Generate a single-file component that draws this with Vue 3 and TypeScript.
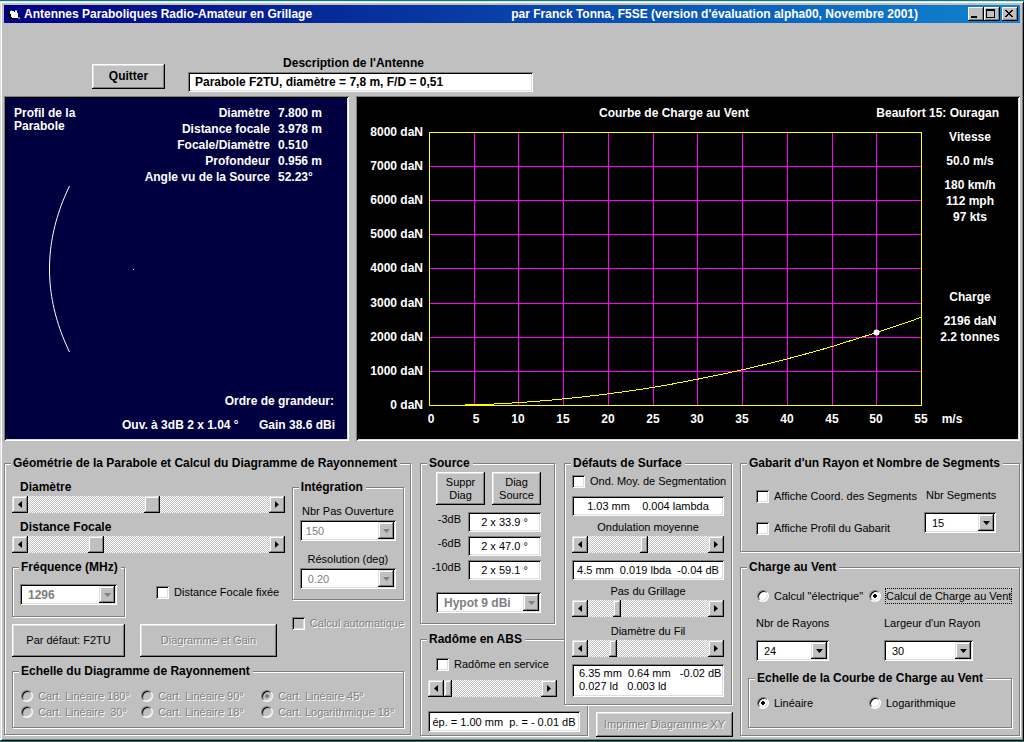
<script setup lang="ts">
import { computed, ref } from 'vue'

interface Slider { id: string; label: string; value: number }

const description = ref('Parabole F2TU, diamètre = 7,8 m, F/D = 0,51')

const profile = [
  { name: 'Diamètre', value: '7.800 m' },
  { name: 'Distance focale', value: '3.978 m' },
  { name: 'Focale/Diamètre', value: '0.510' },
  { name: 'Profondeur', value: '0.956 m' },
  { name: 'Angle vu de la Source', value: '52.23°' },
]

const geometry = ref<Slider[]>([
  { id: 'diametre', label: 'Diamètre', value: 516 },
  { id: 'focale', label: 'Distance Focale', value: 267 },
])
const ripple = ref(460)
const pitch = ref(221)
const wire = ref(186)
const radome = ref(0)

const beams = [
  { level: '-3dB', value: '2 x 33.9 °' },
  { level: '-6dB', value: '2 x 47.0 °' },
  { level: '-10dB', value: '2 x 59.1 °' },
]

const diagramScales = [
  'Cart. Linéaire 180°', 'Cart. Linéaire 90°', 'Cart. Linéaire 45°',
  'Cart. Linéaire  30°', 'Cart. Linéaire 18°', 'Cart. Logarithmique 18°',
]
const diagramScale = ref('Cart. Linéaire 45°')
const mode = ref('vent')
const loadScale = ref('lin')

// Plot area of the wind load chart
const plot = { x: 71, y: 34, w: 492, h: 273 }
const speeds = Array.from({ length: 12 }, (_, i) => i * 5)
const loads = Array.from({ length: 9 }, (_, i) => i * 1000)
const px = (v: number) => plot.x + Math.round((v / 55) * plot.w)
const py = (n: number) => plot.y + plot.h - Math.round((n / 8000) * plot.h)
const curveY = (v: number) => plot.y + plot.h - 73 * (v / 50) ** 2
const gridPath = [
  ...speeds.slice(1, -1).map((s) => `M${px(s) + 0.5} ${plot.y}v${plot.h}`),
  ...loads.slice(1, -1).map((n) => `M${plot.x} ${py(n) + 0.5}h${plot.w}`),
].join('')
const curve = computed(() =>
  Array.from({ length: 56 }, (_, v) => `${px(v) + 0.5},${(curveY(v) + 0.5).toFixed(1)}`).join(' '),
)
const dish = Array.from({ length: 43 }, (_, i) => {
  const dy = -83 + (i * 166) / 42
  return `${(43.5 + 20 * (dy / 83) ** 2).toFixed(1)},${(171 + dy).toFixed(1)}`
}).join(' ')
</script>

<template>
  <main class="window">
    <header class="titlebar">
      <svg class="logo" width="16" height="16" viewBox="0 0 16 16" shape-rendering="crispEdges" aria-hidden="true">
        <path d="M2 5h2v3h1v3h1v1h7v1H4v-1H3V9H2z" fill="#000" />
        <path d="M4 5h7v2h1v5H6v-1H5V8H4z" fill="#fff" />
        <path d="M5 4h1v1H5zM9 4h2v1H9z" fill="#40b0d0" />
        <path d="M6 4h1v1H6zM8 5h1v1H8z" fill="#000" />
        <path d="M12 11h2v2h-2z" fill="#808080" />
      </svg>
      <h1>Antennes Paraboliques Radio-Amateur en Grillage</h1>
      <span class="author">par Franck Tonna, F5SE (version d'évaluation alpha00, Novembre 2001)</span>
      <button type="button" class="sys" aria-label="Réduire">
        <svg width="12" height="10" viewBox="0 0 12 10" shape-rendering="crispEdges"><path d="M2 7h6v2H2z" /></svg>
      </button>
      <button type="button" class="sys" aria-label="Agrandir">
        <svg width="12" height="10" viewBox="0 0 12 10" shape-rendering="crispEdges"><path d="M1 0h9v9H1zM2 2v6h7V2z" fill-rule="evenodd" /></svg>
      </button>
      <button type="button" class="sys close" aria-label="Fermer">
        <svg width="12" height="10" viewBox="0 0 12 10" shape-rendering="crispEdges">
          <path d="M2 1h2v1H2zM8 1h2v1H8zM3 2h2v1H3zM7 2h2v1H7zM4 3h4v1H4zM5 4h2v1H5zM4 5h4v1H4zM3 6h2v1H3zM7 6h2v1H7zM2 7h2v1H2zM8 7h2v1H8z" />
        </svg>
      </button>
    </header>

    <section class="top">
      <button type="button" class="btn strong quit">Quitter</button>
      <div class="describe">
        <label for="description">Description de l'Antenne</label>
        <input id="description" v-model="description" class="box strong" type="text" />
      </div>
    </section>

    <section class="screens">
      <div class="screen navy">
        <svg viewBox="0 0 341 341" role="img" aria-label="Profil de la Parabole">
          <text x="8" y="19">Profil de la</text>
          <text x="8" y="32">Parabole</text>
          <g v-for="(p, i) in profile" :key="p.name">
            <text x="264" :y="19 + i * 16" text-anchor="end">{{ p.name }}</text>
            <text x="272" :y="19 + i * 16">{{ p.value }}</text>
          </g>
          <polyline :points="dish" class="dish" />
          <rect x="127" y="171" width="1" height="1" />
          <text x="328" y="307" text-anchor="end">Ordre de grandeur:</text>
          <text x="116" y="331">Ouv. à 3dB 2 x 1.04 °</text>
          <text x="329" y="331" text-anchor="end">Gain 38.6 dBi</text>
        </svg>
      </div>
      <div class="screen black">
        <svg viewBox="0 0 660 341" role="img" aria-label="Courbe de Charge au Vent">
          <text x="316" y="19" text-anchor="middle">Courbe de Charge au Vent</text>
          <text x="641" y="19" text-anchor="end">Beaufort 15: Ouragan</text>
          <path :d="gridPath" class="grid" />
          <rect :x="plot.x + 0.5" :y="plot.y + 0.5" :width="plot.w" :height="plot.h" class="frame" />
          <polyline :points="curve" class="curve" />
          <circle :cx="px(50) + 0.5" :cy="curveY(50) + 0.5" r="3" />
          <text v-for="n in loads" :key="n" x="65" :y="py(n) + 4" text-anchor="end">{{ n }} daN</text>
          <text v-for="s in speeds" :key="s" :x="px(s) + (s < 10 ? 2 : 0)" y="325" text-anchor="middle">{{ s }}</text>
          <text x="594" y="325" text-anchor="middle">m/s</text>
          <g text-anchor="middle">
            <text x="612" y="43">Vitesse</text>
            <text x="612" y="67">50.0 m/s</text>
            <text x="612" y="91">180 km/h</text>
            <text x="612" y="107">112 mph</text>
            <text x="612" y="123">97 kts</text>
            <text x="612" y="203">Charge</text>
            <text x="612" y="227">2196 daN</text>
            <text x="612" y="243">2.2 tonnes</text>
          </g>
        </svg>
      </div>
    </section>

    <section class="controls">
      <div class="col-a">
        <fieldset class="group">
          <legend>Géométrie de la Parabole et Calcul du Diagramme de Rayonnement</legend>
          <div class="geo">
            <div class="geo-left">
              <div v-for="g in geometry" :key="g.id" class="slider">
                <label :for="g.id" class="strong">{{ g.label }}</label>
                <div class="scroll">
                  <button type="button" class="arrow left" aria-label="Diminuer"></button>
                  <input :id="g.id" v-model.number="g.value" type="range" class="wide" min="0" max="1000" />
                  <button type="button" class="arrow right" aria-label="Augmenter"></button>
                </div>
              </div>
              <div class="freq-row">
                <fieldset class="group freq">
                  <legend>Fréquence (MHz)</legend>
                  <span class="combo off strong">
                    <select disabled aria-label="Fréquence (MHz)"><option>1296</option></select>
                  </span>
                </fieldset>
                <label class="opt"><input type="checkbox" />Distance Focale fixée</label>
              </div>
              <div class="actions">
                <button type="button" class="btn">Par défaut: F2TU</button>
                <button type="button" class="btn" disabled>Diagramme et Gain</button>
              </div>
            </div>
            <div class="geo-right">
              <fieldset class="group">
                <legend>Intégration</legend>
                <label for="pas">Nbr Pas Ouverture</label>
                <span class="combo off"><select id="pas" disabled><option>150</option></select></span>
                <label for="resolution" class="second">Résolution (deg)</label>
                <span class="combo off deg"><select id="resolution" disabled><option>0.20</option></select></span>
              </fieldset>
              <label class="opt off auto"><input type="checkbox" disabled />Calcul automatique</label>
            </div>
          </div>
          <fieldset class="group scales">
            <legend>Echelle du Diagramme de Rayonnement</legend>
            <label v-for="s in diagramScales" :key="s" class="opt off">
              <input v-model="diagramScale" type="radio" name="diagramme" :value="s" disabled />{{ s }}
            </label>
          </fieldset>
        </fieldset>
      </div>

      <div class="col-b">
        <fieldset class="group source">
          <legend>Source</legend>
          <div class="inset">
            <div class="pair">
              <button type="button" class="btn">Suppr<br />Diag</button>
              <button type="button" class="btn">Diag<br />Source</button>
            </div>
            <div v-for="b in beams" :key="b.level" class="beam">
              <label :for="'beam' + b.level">{{ b.level }}</label>
              <input :id="'beam' + b.level" class="box center" type="text" readonly :value="b.value" />
            </div>
            <span class="combo off strong hypot">
              <select disabled aria-label="Type de source"><option>Hypot 9 dBi</option></select>
            </span>
          </div>
        </fieldset>
        <fieldset class="group radome">
          <legend>Radôme en ABS</legend>
          <label class="opt"><input type="checkbox" />Radôme en service</label>
          <div class="scroll">
            <button type="button" class="arrow left" aria-label="Diminuer"></button>
            <input v-model.number="radome" type="range" min="0" max="1000" aria-label="Épaisseur du radôme" />
            <button type="button" class="arrow right" aria-label="Augmenter"></button>
          </div>
          <input class="box center" type="text" readonly aria-label="Épaisseur et perte" value="ép. = 1.00 mm  p. = - 0.01 dB" />
        </fieldset>
      </div>

      <div class="col-c">
        <fieldset class="group defects">
          <legend>Défauts de Surface</legend>
          <label class="opt"><input type="checkbox" />Ond. Moy. de Segmentation</label>
          <input class="box center" type="text" readonly aria-label="Ondulation de segmentation" value="1.03 mm    0.004 lambda" />
          <label for="ondulation" class="mid">Ondulation moyenne</label>
          <div class="scroll">
            <button type="button" class="arrow left" aria-label="Diminuer"></button>
            <input id="ondulation" v-model.number="ripple" type="range" min="0" max="1000" />
            <button type="button" class="arrow right" aria-label="Augmenter"></button>
          </div>
          <input class="box center gap" type="text" readonly aria-label="Perte par ondulation" value="4.5 mm  0.019 lbda  -0.04 dB" />
          <label for="grillage" class="mid">Pas du Grillage</label>
          <div class="scroll">
            <button type="button" class="arrow left" aria-label="Diminuer"></button>
            <input id="grillage" v-model.number="pitch" type="range" min="0" max="1000" />
            <button type="button" class="arrow right" aria-label="Augmenter"></button>
          </div>
          <label for="fil" class="mid">Diamètre du Fil</label>
          <div class="scroll">
            <button type="button" class="arrow left" aria-label="Diminuer"></button>
            <input id="fil" v-model.number="wire" type="range" min="0" max="1000" />
            <button type="button" class="arrow right" aria-label="Augmenter"></button>
          </div>
          <textarea class="box gap" rows="2" readonly aria-label="Perte du grillage" :value="'6.35 mm  0.64 mm   -0.02 dB\n0.027 ld   0.003 ld'"></textarea>
        </fieldset>
        <button type="button" class="btn print" disabled>Imprimer Diagramme XY</button>
      </div>

      <div class="col-d">
        <fieldset class="group template">
          <legend>Gabarit d'un Rayon et Nombre de Segments</legend>
          <div class="template-row">
            <div class="checks">
              <label class="opt"><input type="checkbox" />Affiche Coord. des Segments</label>
              <label class="opt"><input type="checkbox" />Affiche Profil du Gabarit</label>
            </div>
            <div class="segments">
              <label for="segments">Nbr Segments</label>
              <span class="combo"><select id="segments"><option>15</option></select></span>
            </div>
          </div>
        </fieldset>
        <fieldset class="group wind">
          <legend>Charge au Vent</legend>
          <div class="modes">
            <label class="opt"><input v-model="mode" type="radio" name="mode" value="elec" />Calcul "électrique"</label>
            <label class="opt"><input v-model="mode" type="radio" name="mode" value="vent" /><span class="focus">Calcul de Charge au Vent</span></label>
          </div>
          <div class="rays">
            <div>
              <label for="rayons">Nbr de Rayons</label>
              <span class="combo narrow"><select id="rayons"><option>24</option></select></span>
            </div>
            <div>
              <label for="largeur">Largeur d'un Rayon</label>
              <span class="combo medium"><select id="largeur"><option>30</option></select></span>
            </div>
          </div>
          <fieldset class="group load">
            <legend>Echelle de la Courbe de Charge au Vent</legend>
            <label class="opt"><input v-model="loadScale" type="radio" name="echelle" value="lin" />Linéaire</label>
            <label class="opt"><input v-model="loadScale" type="radio" name="echelle" value="log" />Logarithmique</label>
          </fieldset>
        </fieldset>
      </div>
    </section>
  </main>
</template>

<style>
html, body { margin: 0; background: #008080; }
</style>

<style scoped>
* { box-sizing: border-box; }
.window {
  margin: 1px 0;
  padding: 3px;
  border: 1px solid;
  border-color: #dfdfdf #000 #000 #dfdfdf;
  box-shadow: inset 1px 1px #fff, inset -1px -1px #808080;
  background: #c0c0c0;
  color: #000;
  font: 11px/14px "Liberation Sans", Arial, sans-serif;
}
button, input, select, textarea { font: inherit; color: inherit; margin: 0; padding: 0; border: 0; border-radius: 0; }
.strong, legend, h1, .author, .describe label { font-weight: bold; font-size: 12px; }

.titlebar {
  display: flex;
  align-items: center;
  height: 18px;
  padding: 0 2px;
  background: linear-gradient(90deg, #000080, #1084d0);
  color: #fff;
  white-space: nowrap;
}
h1 { margin: 0 0 0 2px; }
.author { margin: 0 50px 0 auto; }
.sys {
  display: flex;
  width: 16px;
  height: 14px;
  padding: 2px 1px;
  background: #c0c0c0;
  color: #000;
  box-shadow: inset -1px -1px #000, inset 1px 1px #fff, inset -2px -2px #808080;
}
.close { margin-left: 2px; }

.top { display: flex; align-items: flex-start; height: 73px; }
.btn {
  background: #c0c0c0;
  line-height: 13px;
  box-shadow: inset -1px -1px #000, inset 1px 1px #fff, inset -2px -2px #808080, inset 2px 2px #dfdfdf;
}
.btn:disabled, .opt.off { color: #808080; text-shadow: 1px 1px #fff; }
.quit { width: 73px; height: 25px; margin: 41px 23px 0 88px; }
.describe { display: grid; width: 345px; margin-top: 33px; row-gap: 2px; }
.describe label { padding-right: 14px; text-align: center; }
.box {
  display: block;
  width: 100%;
  height: 20px;
  padding: 0 7px;
  background: #fff;
  box-shadow: inset 1px 1px #808080, inset -1px -1px #fff, inset 2px 2px #000, inset -2px -2px #dfdfdf;
  outline: 0;
}
.center { padding: 0 2px; text-align: center; white-space: pre; }

.screens { display: grid; grid-template-columns: 345fr 664fr; column-gap: 7px; }
.screen {
  padding: 2px;
  box-shadow: inset 1px 1px #808080, inset -1px -1px #fff, inset 2px 2px #000, inset -2px -2px #dfdfdf;
}
.screen svg { display: block; width: 100%; fill: #fff; font: bold 12px "Liberation Sans", Arial, sans-serif; }
.navy { background: #000040; }
.black { background: #000; }
.dish { fill: none; stroke: #fff; }
.grid { fill: none; stroke: #f0f; shape-rendering: crispEdges; }
.frame { fill: none; stroke: #ff0; shape-rendering: crispEdges; }
.curve { fill: none; stroke: #ff0; shape-rendering: crispEdges; }

.controls { display: grid; grid-template-columns: 416fr 144fr 176fr 280fr; padding-top: 15px; }
.controls > div { min-width: 0; }
.col-a { padding-right: 9px; }
.group {
  min-width: 0;
  margin: 0;
  padding: 0 7px;
  border: 1px solid #808080;
  box-shadow: inset 1px 1px #fff, 1px 1px #fff;
}
legend {
  margin-left: -1px;
  padding: 0 3px 0 2px;
  background: #c0c0c0;
  line-height: 14px;
  white-space: nowrap;
}
.col-a > .group { padding: 0 6px 6px 7px; }
.geo { display: grid; grid-template-columns: 273fr 112fr; column-gap: 7px; padding-top: 10px; }
.slider { margin-bottom: 7px; }
.slider label { display: block; margin: 0 8px 2px; }

.scroll { display: flex; height: 17px; }
.scroll input {
  appearance: none;
  flex: 1;
  min-width: 0;
  height: 17px;
  background: repeating-conic-gradient(#c0c0c0 0 25%, #fff 0 50%) 0 0 / 2px 2px;
  outline: 0;
}
.scroll input::-webkit-slider-thumb {
  appearance: none;
  width: 8px;
  height: 17px;
  background: #c0c0c0;
  box-shadow: inset -1px -1px #000, inset 1px 1px #dfdfdf, inset -2px -2px #808080, inset 2px 2px #fff;
}
.scroll .wide::-webkit-slider-thumb { width: 16px; }
.arrow {
  display: grid;
  place-items: center;
  width: 16px;
  height: 17px;
  background: #c0c0c0;
  box-shadow: inset -1px -1px #000, inset 1px 1px #dfdfdf, inset -2px -2px #808080, inset 2px 2px #fff;
}
.arrow::before { content: ""; width: 4px; height: 7px; background: #000; }
.left::before { clip-path: polygon(100% 0, 100% 100%, 0 50%); }
.right::before { clip-path: polygon(0 0, 100% 50%, 0 100%); }

.combo {
  position: relative;
  display: block;
  height: 21px;
  padding: 2px;
  background: #fff;
  box-shadow: inset 1px 1px #808080, inset -1px -1px #fff, inset 2px 2px #000, inset -2px -2px #dfdfdf;
}
.combo select {
  display: block;
  appearance: none;
  width: 100%;
  height: 17px;
  padding: 0 18px 0 6px;
  background: transparent;
  opacity: 1;
  outline: 0;
}
.combo.off select { padding-left: 4px; color: #808080; }
.combo.strong select, .combo.deg select { padding-left: 6px; }
.combo::before {
  content: "";
  position: absolute;
  top: 2px;
  right: 2px;
  width: 16px;
  height: 17px;
  background: #c0c0c0;
  box-shadow: inset -1px -1px #000, inset 1px 1px #dfdfdf, inset -2px -2px #808080, inset 2px 2px #fff;
  pointer-events: none;
}
.combo::after {
  content: "";
  position: absolute;
  top: 9px;
  right: 6px;
  width: 7px;
  height: 4px;
  background: #000;
  clip-path: polygon(0 0, 100% 0, 50% 100%);
  pointer-events: none;
}
.combo.off::after { background: #808080; }

.opt { display: flex; align-items: center; height: 16px; white-space: pre; }
.opt input { appearance: none; flex: none; outline: 0; }
.opt input[type="checkbox"] {
  width: 13px;
  height: 13px;
  margin-right: 5px;
  background: #fff;
  box-shadow: inset 1px 1px #808080, inset -1px -1px #fff, inset 2px 2px #000, inset -2px -2px #dfdfdf;
}
.opt.off input[type="checkbox"] { background: #c0c0c0; }
.opt input[type="radio"] {
  width: 12px;
  height: 12px;
  margin: 0 5px 0 1px;
  border: 1px solid;
  border-color: #808080 #fff #fff #808080;
  border-radius: 50%;
  background: #fff;
  box-shadow: inset 1px 1px #000, inset -1px -1px #dfdfdf;
}
.opt.off input[type="radio"] { background: #c0c0c0; }
.opt input[type="radio"]:checked { background: radial-gradient(circle at 50% 50%, #000 0 2px, #fff 2px); }
.opt.off input[type="radio"]:checked { background: radial-gradient(circle at 50% 50%, #808080 0 2px, #c0c0c0 2px); }

.freq-row { display: flex; }
.freq { flex: none; width: 113px; padding: 10px 7px 11px; }
.freq-row .opt { margin: 24px 0 0 31px; }
.actions { display: flex; column-gap: 15px; margin-top: 7px; }
.actions .btn { width: 113px; height: 33px; }
.actions .btn + .btn { width: 137px; }
.geo-right .group { padding: 10px 7px; }
.geo-right .group label { display: block; margin-bottom: 2px; text-align: center; white-space: nowrap; }
.geo-right .group .second { margin-top: 11px; }
.geo-right .auto { margin-top: 15px; }
.scales {
  display: grid;
  grid-template-columns: 120fr 120fr 136fr;
  margin-top: 7px;
  padding: 10px 7px 7px;
}

.source { width: calc(100% - 9px); padding-bottom: 10px; }
.inset { padding: 2px 6px 0 8px; }
.pair { display: grid; grid-template-columns: 1fr 1fr; column-gap: 7px; margin-bottom: 7px; }
.pair .btn { height: 33px; }
.beam { display: flex; justify-content: flex-end; column-gap: 7px; margin-bottom: 4px; }
.beam .box { flex: none; width: 73px; }
.hypot { margin-top: 12px; }
.radome { width: calc(100% + 24px); margin-top: 8px; padding: 10px 7px 3px; }
.radome .opt { margin-left: 8px; }
.radome .scroll { width: 129px; margin: 8px 0 14px; }
.radome .box { height: 21px; }

.col-c { position: relative; padding-right: 8px; }
.defects { padding: 3px 7px 7px; background: #c0c0c0; }
.defects .opt { margin-bottom: 7px; }
.mid { display: block; margin: 4px 0 2px; text-align: center; }
.defects .scroll + .mid { margin-top: 7px; }
.gap { margin-top: 7px; }
textarea.box { height: 33px; padding: 3px 7px; line-height: 13px; white-space: pre; resize: none; overflow: hidden; }
.print { display: block; width: 137px; height: 25px; margin: 7px 0 0 32px; }

.template { padding-bottom: 15px; }
.template-row { display: flex; justify-content: space-between; padding: 18px 16px 0 8px; }
.checks { display: grid; row-gap: 16px; height: 48px; }
.segments { width: 72px; }
.segments label { display: block; margin: 0 0 10px 2px; white-space: nowrap; }
.wind { margin-top: 8px; padding-bottom: 7px; }
.modes, .rays { display: grid; padding-left: 8px; }
.modes { grid-template-columns: 112fr 144fr; padding-top: 14px; }
.rays { grid-template-columns: 128fr 128fr; margin-top: 12px; }
.modes > *, .rays > * { min-width: 0; }
.focus { outline: 1px dotted #000; line-height: 14px; }
.rays label { display: block; margin-bottom: 10px; }
.narrow { width: 73px; }
.medium { width: 89px; }
.load { display: grid; grid-template-columns: 112fr 136fr; margin-top: 10px; padding: 10px 7px 16px; }
</style>
